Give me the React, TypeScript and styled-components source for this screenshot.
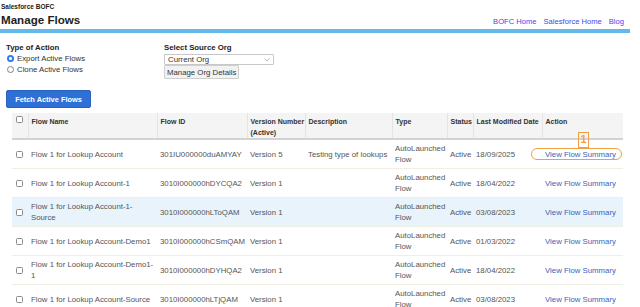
import styled, { createGlobalStyle } from 'styled-components';

const GlobalStyle = createGlobalStyle`
  html, body {
    margin: 0;
    padding: 0;
    background: #ffffff;
  }
  body {
    font-family: "Liberation Sans", Arial, Helvetica, sans-serif;
    color: #222;
  }
`;

const Page = styled.div`
  width: 640px;
  height: 307px;
  overflow: hidden;
  position: relative;
`;

const TopBar = styled.div`
  width: 630px;
  border-bottom: 4px solid #63b9e9;
`;

const Brand = styled.div`
  font-size: 6.5px;
  font-weight: bold;
  line-height: 10px;
  padding: 2px 0 0 1px;
`;

const TitleRow = styled.div`
  display: flex;
  align-items: center;
  justify-content: space-between;
  height: 16px;
  padding: 0 6px 1px 1px;
`;

const Title = styled.h1`
  margin: 0;
  font-size: 11.6px;
  font-weight: bold;
  line-height: 14px;
`;

const NavLinks = styled.nav`
  display: flex;
  gap: 7px;
  padding-top: 2px;
`;

const NavLink = styled.a`
  font-size: 7.6px;
  color: #4545f2;
  text-decoration: none;
  &:visited {
    color: #4545f2;
  }
`;

const FormArea = styled.div`
  display: flex;
  padding: 9px 0 0 6px;
`;

const FormColumn = styled.div<{ $width?: number }>`
  width: ${(p) => (p.$width ? `${p.$width}px` : 'auto')};
  display: flex;
  flex-direction: column;
  align-items: flex-start;
`;

const Label = styled.div`
  font-size: 7.8px;
  font-weight: bold;
  line-height: 11px;
  color: #222;
`;

const RadioRow = styled.label`
  display: flex;
  align-items: center;
  gap: 3px;
  font-size: 7.8px;
  line-height: 11px;
  color: #333;
`;

const Radio = styled.input.attrs({ type: 'radio' })`
  appearance: none;
  margin: 0 0 0 1px;
  width: 7px;
  height: 7px;
  border-radius: 50%;
  border: 1px solid #808080;
  background: #fff;
  box-sizing: border-box;
  &:checked {
    border: none;
    background: radial-gradient(circle, #ffffff 0 1.3px, #2d7be5 1.6px);
  }
`;

const SelectWrap = styled.div`
  position: relative;
  width: 110px;
  height: 11px;
  margin-top: 1px;
`;

const Select = styled.select`
  appearance: none;
  display: block;
  width: 110px;
  height: 11px;
  margin: 0;
  padding: 0 0 0 3px;
  font-family: inherit;
  font-size: 7.8px;
  line-height: 9px;
  color: #333;
  border: 1px solid #c8c8c8;
  border-radius: 1px;
  background: #fff;
  box-sizing: border-box;
`;

const Chevron = styled.svg`
  position: absolute;
  right: 4px;
  top: 4px;
  pointer-events: none;
`;

const GrayButton = styled.button`
  display: block;
  margin: 0;
  height: 14px;
  padding: 0 2px;
  font-family: inherit;
  font-size: 7.8px;
  color: #333;
  background: #f2f2f2;
  border: 1px solid #cfcfcf;
  border-radius: 1px;
  box-sizing: border-box;
`;

const PrimaryButton = styled.button`
  display: block;
  margin: 11px 0 0 6px;
  width: 85px;
  height: 18px;
  padding: 0;
  font-family: inherit;
  font-size: 7.4px;
  font-weight: bold;
  color: #fff;
  background: #2f70d6;
  border: 1px solid #2a62be;
  border-radius: 2px;
  box-sizing: border-box;
`;

const TableWrap = styled.div`
  margin: 5px 0 0 12px;
  width: 611px;
  position: relative;
`;

const Table = styled.table`
  width: 611px;
  table-layout: fixed;
  border-collapse: collapse;
  font-size: 7.8px;
`;

const Th = styled.th`
  background: #f4f4f4;
  color: #333;
  font-size: 7px;
  font-weight: bold;
  text-align: left;
  vertical-align: top;
  white-space: nowrap;
  line-height: 11px;
  height: 21px;
  padding: 3px 0 0 3px;
  border-left: 1px solid #e4e4e4;
  border-bottom: 2px solid #d2d2d2;
  &:first-child {
    border-left: none;
  }
`;

const Tr = styled.tr<{ $active?: boolean }>`
  background: ${(p) => (p.$active ? '#e8f3fc' : '#ffffff')};
  border-bottom: 1px solid #f1efe2;
`;

const Td = styled.td`
  color: #555;
  line-height: 11px;
  height: 22px;
  padding: 3px 0 3px 3px;
  vertical-align: middle;
`;

const NoWrapTd = styled(Td)`
  white-space: nowrap;
`;

const Checkbox = styled.input.attrs({ type: 'checkbox' })`
  appearance: none;
  display: block;
  margin: 0 0 0 1px;
  width: 7px;
  height: 7px;
  border: 1px solid #8a8a8a;
  border-radius: 1.5px;
  background: #fff;
  box-sizing: border-box;
`;

const SummaryLink = styled.a`
  color: #3b63b8;
  text-decoration: none;
  white-space: nowrap;
  &:visited {
    color: #3b63b8;
  }
`;

const MarkerNumber = styled.div`
  position: absolute;
  left: 566px;
  top: 19px;
  width: 11px;
  height: 16px;
  border: 1.5px solid #f0a044;
  box-sizing: border-box;
  color: #f0a044;
  font-size: 11px;
  font-weight: bold;
  line-height: 13px;
  text-align: center;
`;

const MarkerPill = styled.div`
  position: absolute;
  left: 519px;
  top: 35px;
  width: 91px;
  height: 12px;
  border: 1.5px solid #f0a044;
  border-radius: 7px;
  box-sizing: border-box;
`;

type Flow = {
  name: string;
  id: string;
  version: string;
  description: string;
  date: string;
};

const flows: Flow[] = [
  { name: 'Flow 1 for Lookup Account', id: '301IU000000duAMYAY', version: 'Version 5', description: 'Testing type of lookups', date: '18/09/2025' },
  { name: 'Flow 1 for Lookup Account-1', id: '3010I000000hDYCQA2', version: 'Version 1', description: '', date: '18/04/2022' },
  { name: 'Flow 1 for Lookup Account-1-Source', id: '3010I000000hLToQAM', version: 'Version 1', description: '', date: '03/08/2023' },
  { name: 'Flow 1 for Lookup Account-Demo1', id: '3010I000000hCSmQAM', version: 'Version 1', description: '', date: '01/03/2022' },
  { name: 'Flow 1 for Lookup Account-Demo1-1', id: '3010I000000hDYHQA2', version: 'Version 1', description: '', date: '18/04/2022' },
  { name: 'Flow 1 for Lookup Account-Source', id: '3010I000000hLTjQAM', version: 'Version 1', description: '', date: '03/08/2023' },
];

const columns = [16, 129, 90, 58, 87, 55, 26, 69, 81];

const App: React.FC = () => {
  return (
    <Page>
      <GlobalStyle />
      <TopBar>
        <Brand>Salesforce BOFC</Brand>
        <TitleRow>
          <Title>Manage Flows</Title>
          <NavLinks>
            <NavLink href="#">BOFC Home</NavLink>
            <NavLink href="#">Salesforce Home</NavLink>
            <NavLink href="#">Blog</NavLink>
          </NavLinks>
        </TitleRow>
      </TopBar>

      <FormArea>
        <FormColumn $width={158}>
          <Label>Type of Action</Label>
          <RadioRow>
            <Radio name="action" defaultChecked />
            Export Active Flows
          </RadioRow>
          <RadioRow>
            <Radio name="action" />
            Clone Active Flows
          </RadioRow>
        </FormColumn>
        <FormColumn>
          <Label>Select Source Org</Label>
          <SelectWrap>
            <Select defaultValue="current">
              <option value="current">Current Org</option>
            </Select>
            <Chevron width="6" height="4" viewBox="0 0 6 4">
              <path d="M0.5 0.5 L3 3 L5.5 0.5" fill="none" stroke="#aaa" strokeWidth="0.8" />
            </Chevron>
          </SelectWrap>
          <GrayButton>Manage Org Details</GrayButton>
        </FormColumn>
      </FormArea>

      <PrimaryButton>Fetch Active Flows</PrimaryButton>

      <TableWrap>
        <Table>
          <colgroup>
            {columns.map((w, i) => (
              <col key={i} style={{ width: w }} />
            ))}
          </colgroup>
          <thead>
            <tr>
              <Th>
                <Checkbox />
              </Th>
              <Th>Flow Name</Th>
              <Th>Flow ID</Th>
              <Th>
                Version Number
                <br />
                (Active)
              </Th>
              <Th>Description</Th>
              <Th>Type</Th>
              <Th>Status</Th>
              <Th>Last Modified Date</Th>
              <Th>Action</Th>
            </tr>
          </thead>
          <tbody>
            {flows.map((flow, i) => (
              <Tr key={flow.id} $active={i === 2}>
                <Td>
                  <Checkbox />
                </Td>
                <Td>{flow.name}</Td>
                <NoWrapTd>{flow.id}</NoWrapTd>
                <NoWrapTd>{flow.version}</NoWrapTd>
                <Td>{flow.description}</Td>
                <Td>AutoLaunched Flow</Td>
                <NoWrapTd>Active</NoWrapTd>
                <NoWrapTd>{flow.date}</NoWrapTd>
                <Td>
                  <SummaryLink href="#">View Flow Summary</SummaryLink>
                </Td>
              </Tr>
            ))}
          </tbody>
        </Table>
        <MarkerNumber>1</MarkerNumber>
        <MarkerPill />
      </TableWrap>
    </Page>
  );
};

export default App;
